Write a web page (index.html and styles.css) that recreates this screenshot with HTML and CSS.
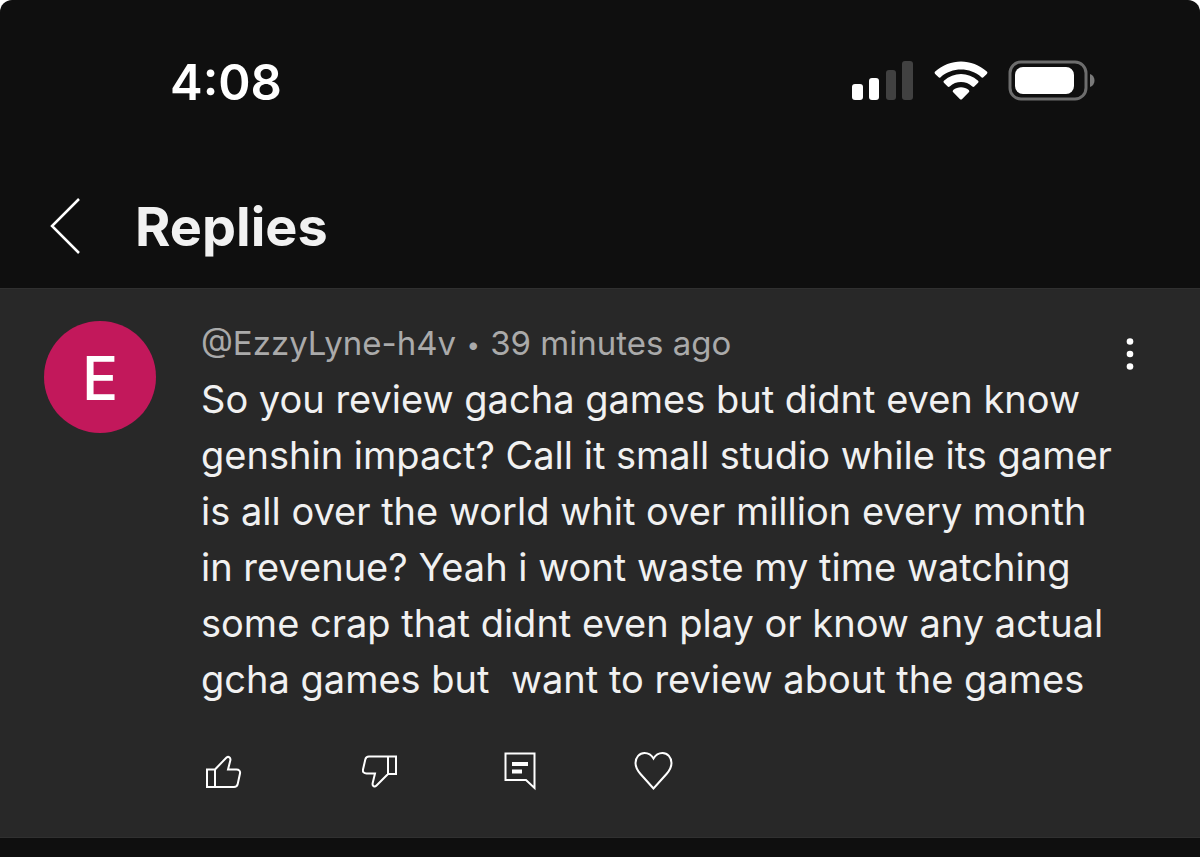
FILE: index.html
```html
<!DOCTYPE html>
<html lang="en">
<head>
    <meta charset="UTF-8">
    <meta name="viewport" content="width=device-width, initial-scale=1.0">
    <title>Replies</title>
    <link rel="stylesheet" href="styles.css">
</head>
<body>
    <div class="screen">
        <div class="status-bar">
            <span class="time">4:08</span>
            <div class="status-icons">
                <svg width="62" height="40" viewBox="0 0 62 40">
                    <rect x="0" y="24" width="11" height="16" rx="3" fill="#fff"/>
                    <rect x="17" y="18" width="10" height="22" rx="3" fill="#fff"/>
                    <rect x="34" y="10" width="10" height="30" rx="3" fill="#414141"/>
                    <rect x="50" y="1" width="11" height="39" rx="3" fill="#414141"/>
                </svg>
                <svg width="54" height="40" viewBox="0 0 54 40" fill="#fff">
                    <path d="M1.200 11.500Q0 12.700 1.200 13.900L4.600 17.300Q5.500 18.200 6.600 17.200C18 7 36 7 47.400 17.200Q48.500 18.200 49.400 17.300L52.800 13.900Q54 12.700 52.800 11.500C38-2 16-2 1.200 11.500Z"/>
                    <path d="M9.900 20.700Q8.900 21.700 9.900 22.700L13.700 26.500Q14.600 27.300 15.700 26.400C22 20.500 32 20.500 38.300 26.400Q39.400 27.300 40.300 26.500L44.100 22.700Q45.100 21.700 44.100 20.700C34 11.700 20 11.700 9.900 20.700Z"/>
                    <path d="M19.200 30Q18 31.200 19.200 32.300L25.800 38.900Q27 40 28.200 38.900L34.800 32.300Q36 31.200 34.800 30C30.200 26.300 23.800 26.300 19.200 30Z"/>
                </svg>
                <svg width="88" height="41" viewBox="0 0 88 41">
                    <rect x="2" y="2" width="76" height="37" rx="11" fill="none" stroke="#6d6d6d" stroke-width="3"/>
                    <rect x="7" y="7" width="59" height="27" rx="8" fill="#fff"/>
                    <path d="M82 14C88 16 88 25 82 27Z" fill="#7a7a7a"/>
                </svg>
            </div>
        </div>

        <header class="header">
            <button class="icon-btn" aria-label="Back">
                <svg width="32" height="56" viewBox="0 0 32 56" fill="none" stroke="#fff" stroke-width="2.500">
                    <path d="M29 1L2 28L29 55"/>
                </svg>
            </button>
            <h1 class="title">Replies</h1>
        </header>

        <article class="comment">
            <div class="avatar">E</div>
            <div class="comment-main">
                <div class="meta">@EzzyLyne-h4v <span class="dot">•</span> 39 minutes ago</div>
                <p class="comment-text">So you review gacha games but didnt even know genshin impact? Call it small studio while its gamer is all over the world whit over million every month in revenue? Yeah i wont waste my time watching some crap that didnt even play or know any actual gcha games but  want to review about the games</p>
                <div class="actions">
                    <button class="icon-btn like" aria-label="Like">
                        <svg width="36" height="40" viewBox="0 0 36 40" fill="none" stroke="#fff" stroke-width="2">
                            <path d="M1 18.500H9V36H1ZM9 18.500L20.500 6.500C22.500 5 25 6.500 24.300 9.500L22 18.500H30.500C33 18.500 34.500 20 34 22.500L31.700 33Q31 36 28 36H9"/>
                        </svg>
                    </button>
                    <button class="icon-btn dislike" aria-label="Dislike">
                        <svg width="36" height="40" viewBox="0 0 36 40" fill="none" stroke="#fff" stroke-width="2">
                            <path d="M34 5.500H26V23H34ZM26 23L14.500 34.500C12.500 36.500 10 35 10.700 32L13 22.500H4.500C2 22.500.500 21 1 18.500L3.300 8.500Q4 5.500 7 5.500H26"/>
                        </svg>
                    </button>
                    <button class="icon-btn" aria-label="Reply">
                        <svg width="32" height="40" viewBox="0 0 32 40">
                            <path d="M1.500 2.500H30.500V37L22 29H1.500Z" fill="none" stroke="#fff" stroke-width="2"/>
                            <path d="M8 11H24V15H8ZM8 18.500H18V22.500H8Z" fill="#fff"/>
                        </svg>
                    </button>
                    <button class="icon-btn" aria-label="Heart">
                        <svg width="40" height="40" viewBox="0 0 40 40" fill="none" stroke="#fff" stroke-width="2">
                            <path d="M19.500 37.500L6.500 23C3 19 1.500 16 1.500 12C1.500 6.500 5.500 2 10.500 2C14.500 2 17.500 4 19.500 7.500C21.500 4 24.500 2 28.500 2C33.500 2 37.500 6.500 37.500 12C37.500 16 36 19 32.500 23Z"/>
                        </svg>
                    </button>
                </div>
            </div>
            <button class="icon-btn menu" aria-label="More">
                <svg width="8" height="32" viewBox="0 0 8 32" fill="#fff">
                    <circle cx="4" cy="3.500" r="3.300"/>
                    <circle cx="4" cy="16" r="3.300"/>
                    <circle cx="4" cy="28.500" r="3.300"/>
                </svg>
            </button>
        </article>
    </div>
</body>
</html>
```
FILE: styles.css
```css
* {
    margin: 0;
    padding: 0;
    box-sizing: border-box;
}

body {
    font-family: Inter, "Liberation Sans", sans-serif;
    background: #fff;
    color: #f1f1f1;
}

.screen {
    min-height: 100vh;
    background: #0f0f0f;
    border-radius: 12px 12px 0 0;
}

.status-bar {
    display: flex;
    align-items: center;
    justify-content: space-between;
    height: 164px;
    padding: 0 104px 0 170px;
}

.time {
    font-size: 49px;
    font-weight: 600;
    color: #fff;
}

.status-icons {
    display: flex;
    gap: 20px;
    padding-bottom: 4px;
}

svg {
    display: block;
}

.header {
    display: flex;
    align-items: center;
    gap: 53px;
    height: 124px;
    padding: 0 50px;
}

.title {
    font-size: 54px;
    font-weight: 700;
}

.icon-btn {
    border: none;
    background: none;
}

.comment {
    display: flex;
    align-items: flex-start;
    padding: 32px 66px 46px 44px;
    background: #282828;
    border-top: 1px solid #303030;
    border-bottom: 1px solid #303030;
}

.avatar {
    flex: none;
    width: 112px;
    height: 112px;
    margin-right: 45px;
    border-radius: 50%;
    background: #c2185b;
    color: #fff;
    font-size: 60px;
    font-weight: 500;
    line-height: 114px;
    text-align: center;
}

.comment-main {
    flex: 1;
}

.meta {
    font-size: 33px;
    line-height: 44px;
    color: #aaa;
}

.dot {
    margin: 0 1px;
    font-size: 24px;
    line-height: 1;
    vertical-align: 2px;
}

.comment-text {
    margin-top: 6px;
    font-size: 38px;
    line-height: 56px;
    white-space: pre-wrap;
}

.actions {
    display: flex;
    gap: 98px;
    margin-top: 44px;
    padding-left: 5px;
}

.like {
    padding-right: 22px;
}

.dislike {
    padding-right: 8px;
}

.menu {
    margin-top: 17px;
}
```
